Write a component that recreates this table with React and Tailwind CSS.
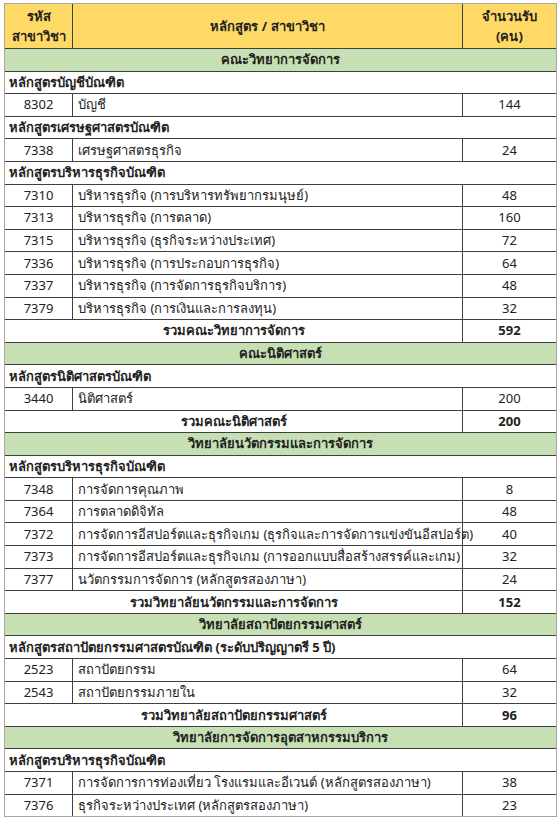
const sections = [
  {
    faculty: 'คณะวิทยาการจัดการ',
    groups: [
      { title: 'หลักสูตรบัญชีบัณฑิต', rows: [['8302', 'บัญชี', '144']] },
      { title: 'หลักสูตรเศรษฐศาสตรบัณฑิต', rows: [['7338', 'เศรษฐศาสตรธุรกิจ', '24']] },
      {
        title: 'หลักสูตรบริหารธุรกิจบัณฑิต',
        rows: [
          ['7310', 'บริหารธุรกิจ (การบริหารทรัพยากรมนุษย์)', '48'],
          ['7313', 'บริหารธุรกิจ (การตลาด)', '160'],
          ['7315', 'บริหารธุรกิจ (ธุรกิจระหว่างประเทศ)', '72'],
          ['7336', 'บริหารธุรกิจ (การประกอบการธุรกิจ)', '64'],
          ['7337', 'บริหารธุรกิจ (การจัดการธุรกิจบริการ)', '48'],
          ['7379', 'บริหารธุรกิจ (การเงินและการลงทุน)', '32'],
        ],
      },
    ],
    total: ['รวมคณะวิทยาการจัดการ', '592'],
  },
  {
    faculty: 'คณะนิติศาสตร์',
    groups: [{ title: 'หลักสูตรนิติศาสตรบัณฑิต', rows: [['3440', 'นิติศาสตร์', '200']] }],
    total: ['รวมคณะนิติศาสตร์', '200'],
  },
  {
    faculty: 'วิทยาลัยนวัตกรรมและการจัดการ',
    groups: [
      {
        title: 'หลักสูตรบริหารธุรกิจบัณฑิต',
        rows: [
          ['7348', 'การจัดการคุณภาพ', '8'],
          ['7364', 'การตลาดดิจิทัล', '48'],
          ['7372', 'การจัดการอีสปอร์ตและธุรกิจเกม (ธุรกิจและการจัดการแข่งขันอีสปอร์ต)', '40'],
          ['7373', 'การจัดการอีสปอร์ตและธุรกิจเกม (การออกแบบสื่อสร้างสรรค์และเกม)', '32'],
          ['7377', 'นวัตกรรมการจัดการ (หลักสูตรสองภาษา)', '24'],
        ],
      },
    ],
    total: ['รวมวิทยาลัยนวัตกรรมและการจัดการ', '152'],
  },
  {
    faculty: 'วิทยาลัยสถาปัตยกรรมศาสตร์',
    groups: [
      {
        title: 'หลักสูตรสถาปัตยกรรมศาสตรบัณฑิต (ระดับปริญญาตรี 5 ปี)',
        rows: [
          ['2523', 'สถาปัตยกรรม', '64'],
          ['2543', 'สถาปัตยกรรมภายใน', '32'],
        ],
      },
    ],
    total: ['รวมวิทยาลัยสถาปัตยกรรมศาสตร์', '96'],
  },
  {
    faculty: 'วิทยาลัยการจัดการอุตสาหกรรมบริการ',
    groups: [
      {
        title: 'หลักสูตรบริหารธุรกิจบัณฑิต',
        rows: [
          ['7371', 'การจัดการการท่องเที่ยว โรงแรมและอีเวนต์ (หลักสูตรสองภาษา)', '38'],
          ['7376', 'ธุรกิจระหว่างประเทศ (หลักสูตรสองภาษา)', '23'],
        ],
      },
    ],
  },
]

const row = 'flex h-[22.6px] border-t border-[#404040] items-center'

function Section({ s }) {
  return (
    <>
      <div className={`${row} justify-center bg-[#c6e0b4] font-bold`}>{s.faculty}</div>
      {s.groups.map((g, gi) => (
        <div key={gi}>
          <div className={`${row} px-1 font-bold`}>{g.title}</div>
          {g.rows.map(([code, name, n]) => (
            <div key={code} className={`${row} items-stretch`}>
              <div className="w-[68px] flex items-center justify-center border-r border-[#404040]">{code}</div>
              <div className="w-[390px] flex items-center px-[5px] border-r border-[#404040] whitespace-nowrap">{name}</div>
              <div className="flex-1 flex items-center justify-center">{n}</div>
            </div>
          ))}
        </div>
      ))}
      {s.total && (
        <div className={`${row} items-stretch font-bold`}>
          <div className="w-[458px] flex items-center justify-center border-r border-[#404040]">{s.total[0]}</div>
          <div className="flex-1 flex items-center justify-center">{s.total[1]}</div>
        </div>
      )}
    </>
  )
}

export default function App() {
  return (
    <div className="w-[560px] h-[820px] bg-white pt-[3px] pl-[4px] text-[13px] leading-none text-[#222] font-['Noto_Sans','DejaVu_Sans',sans-serif]">
      <div className="w-[553px] border border-[#a6a6a6]">
        <div className="flex h-[44px] bg-[#ffd966] font-bold">
          <div className="w-[68px] flex flex-col items-center justify-center gap-[7px] border-r border-[#404040]">
            <span>รหัส</span>
            <span>สาขาวิชา</span>
          </div>
          <div className="w-[390px] flex items-center justify-center border-r border-[#404040]">หลักสูตร / สาขาวิชา</div>
          <div className="flex-1 flex flex-col items-center justify-center gap-[7px]">
            <span>จำนวนรับ</span>
            <span>(คน)</span>
          </div>
        </div>
        {sections.map((s) => (
          <Section key={s.faculty} s={s} />
        ))}
      </div>
    </div>
  )
}
